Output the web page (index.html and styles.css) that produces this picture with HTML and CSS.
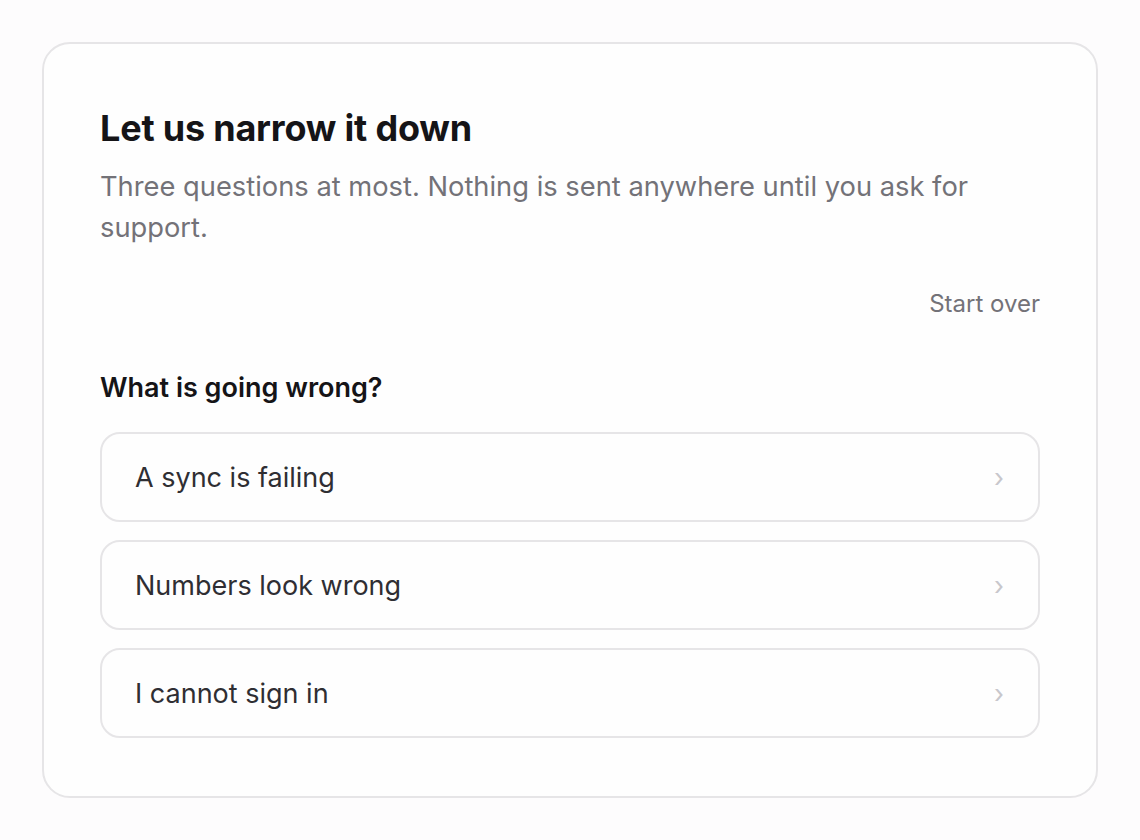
FILE: index.html
```html
<!DOCTYPE html>
<html>
<head>
    <meta charset="utf-8">
    <link rel="stylesheet" href="styles.css">
</head>
<body>
    <div class="card">
        <h1 class="title">Let us narrow it down</h1>
        <p class="lead">Three questions at most. Nothing is sent anywhere until you ask for support.</p>

        <div class="toolbar">
            <button class="link-btn">Start over</button>
        </div>

        <!-- current question -->
        <h2 class="question">What is going wrong?</h2>
        <div class="options">
            <button class="option"><span>A sync is failing</span><span class="chev">›</span></button>
            <button class="option"><span>Numbers look wrong</span><span class="chev">›</span></button>
            <button class="option"><span>I cannot sign in</span><span class="chev">›</span></button>
        </div>
    </div>
</body>
</html>
```

FILE: styles.css
```css
/* page */
body {
    margin: 0;
    padding: 42px;
    background-color: #fdfcfd;
    font-family: Inter, "Noto Sans", sans-serif;
}

.card {
    border: 2px solid #e6e5e7;
    border-radius: 28px;
    background-color: #fefefe;
    padding: 62px 56px 58px 56px;
}

.title {
    margin: 0;
    font-size: 36px;
    font-weight: 700;
    letter-spacing: -0.2px;
    line-height: 44px;
    color: #151417;
}

.lead {
    margin: 16px 0 0 0;
    font-size: 27.3px;
    line-height: 41px;
    color: #737278;
}

.toolbar {
    display: flex;
    justify-content: flex-end;
    margin-top: 41px;
}

.link-btn {
    background: none;
    border: none;
    padding: 0;
    font-family: inherit;
    font-size: 24px;
    line-height: 30px;
    color: #737278;
    cursor: pointer;
}

.question {
    margin: 53px 0 0 0;
    font-size: 27px;
    font-weight: 600;
    line-height: 32px;
    color: #151417;
}

.options {
    display: flex;
    flex-direction: column;
    gap: 18px;
    margin-top: 28px;
}

.option {
    display: flex;
    justify-content: space-between;
    align-items: center;
    height: 90px;
    padding: 0 34px 0 33px;
    border: 2px solid #e6e5e7;
    border-radius: 20px;
    background-color: #fefefe;
    font-family: inherit;
    font-size: 27px;
    color: #2f2e33;
    text-align: left;
    cursor: pointer;
}

.chev {
    color: #c8c7cc;
    font-size: 26px;
}
```
